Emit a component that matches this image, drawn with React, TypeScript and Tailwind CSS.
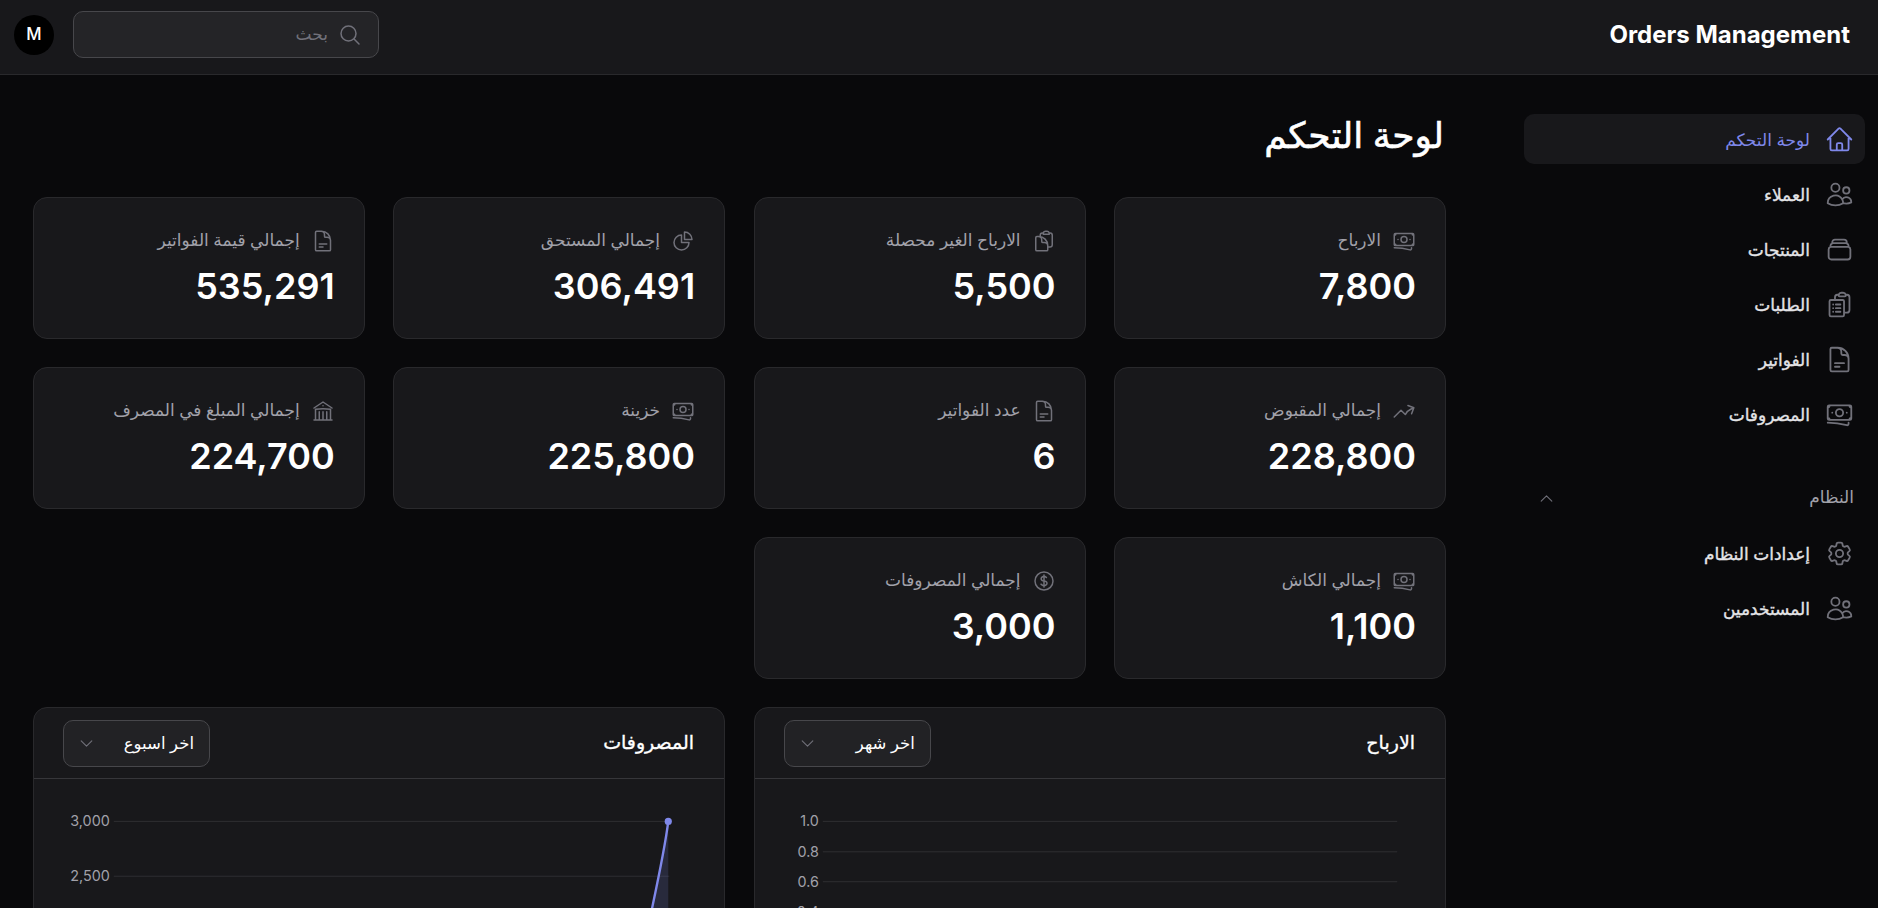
import type { ComponentType, ReactNode } from 'react'
import {
    HiOutlineArrowTrendingUp,
    HiOutlineBanknotes,
    HiOutlineBuildingLibrary,
    HiOutlineChartPie,
    HiOutlineChevronDown,
    HiOutlineChevronUp,
    HiOutlineClipboardDocument,
    HiOutlineClipboardDocumentList,
    HiOutlineCog6Tooth,
    HiOutlineCurrencyDollar,
    HiOutlineDocumentText,
    HiOutlineHome,
    HiOutlineMagnifyingGlass,
    HiOutlineRectangleStack,
    HiOutlineUsers,
} from 'react-icons/hi2'

type Icon = ComponentType<{ className?: string }>

const navTop: { label: string; icon: Icon; active?: boolean }[] = [
    { label: 'لوحة التحكم', icon: HiOutlineHome, active: true },
    { label: 'العملاء', icon: HiOutlineUsers },
    { label: 'المنتجات', icon: HiOutlineRectangleStack },
    { label: 'الطلبات', icon: HiOutlineClipboardDocumentList },
    { label: 'الفواتير', icon: HiOutlineDocumentText },
    { label: 'المصروفات', icon: HiOutlineBanknotes },
]

const navSystem: { label: string; icon: Icon }[] = [
    { label: 'إعدادات النظام', icon: HiOutlineCog6Tooth },
    { label: 'المستخدمين', icon: HiOutlineUsers },
]

const stats: { label: string; value: string; icon: Icon }[] = [
    { label: 'الارباح', value: '7,800', icon: HiOutlineBanknotes },
    { label: 'الارباح الغير محصلة', value: '5,500', icon: HiOutlineClipboardDocument },
    { label: 'إجمالي المستحق', value: '306,491', icon: HiOutlineChartPie },
    { label: 'إجمالي قيمة الفواتير', value: '535,291', icon: HiOutlineDocumentText },
    { label: 'إجمالي المقبوض', value: '228,800', icon: HiOutlineArrowTrendingUp },
    { label: 'عدد الفواتير', value: '6', icon: HiOutlineDocumentText },
    { label: 'خزينة', value: '225,800', icon: HiOutlineBanknotes },
    { label: 'إجمالي المبلغ في المصرف', value: '224,700', icon: HiOutlineBuildingLibrary },
    { label: 'إجمالي الكاش', value: '1,100', icon: HiOutlineBanknotes },
    { label: 'إجمالي المصروفات', value: '3,000', icon: HiOutlineCurrencyDollar },
]

function NavItem({ label, icon: Icon, active }: { label: string; icon: Icon; active?: boolean }) {
    return (
        <a className={`flex h-[50px] items-center gap-[15px] rounded-[10px] px-[11px] ${active ? 'bg-[#18181b]' : ''}`}>
            <Icon className={`h-[29px] w-[29px] shrink-0 ${active ? 'text-[#7f88ea]' : 'text-[#71717a]'}`} />
            <span
                className={`pt-[3px] text-[17px] font-medium ${
                    active ? 'text-[#7f88ea]' : 'text-[#e4e4e7] [-webkit-text-stroke-width:0.35px]'
                }`}
            >
                {label}
            </span>
        </a>
    )
}

function Sidebar() {
    return (
        <aside className="flex w-[386px] shrink-0 flex-col pt-[39px] pr-[13px] pl-[32px]">
            <nav className="flex flex-col gap-[5px]">
                {navTop.map((item) => (
                    <NavItem key={item.label} {...item} />
                ))}
            </nav>
            <div className="mt-[34px] flex h-[50px] items-center justify-between pr-[11px] pl-[14px]">
                <span className="text-[17px] font-medium text-[#a1a1aa]">النظام</span>
                <HiOutlineChevronUp className="h-[17px] w-[17px] text-[#71717a]" />
            </div>
            <nav className="mt-[5px] flex flex-col gap-[5px]">
                {navSystem.map((item) => (
                    <NavItem key={item.label} {...item} />
                ))}
            </nav>
        </aside>
    )
}

function StatCard({ label, value, icon: Icon }: { label: string; value: string; icon: Icon }) {
    return (
        <div className="flex h-[142px] flex-col gap-[12px] rounded-[14px] border border-[#29292c] bg-[#18181b] px-[29px] py-[31px]">
            <div className="flex h-[24px] items-center gap-[11px]">
                <Icon className="h-[24px] w-[24px] shrink-0 text-[#71717a]" />
                <span className="text-[17px] font-medium text-[#a1a1aa]">{label}</span>
            </div>
            <div dir="ltr" className="text-right text-[36px] leading-[43px] font-semibold text-white">
                {value}
            </div>
        </div>
    )
}

function Select({ label }: { label: string }) {
    return (
        <div className="flex h-[47px] w-[147px] items-center justify-between rounded-[10px] border border-[#47474b] bg-[#222225] pr-[15px] pl-[14px]">
            <span className="text-[16.5px] text-white">{label}</span>
            <HiOutlineChevronDown className="h-[17px] w-[17px] text-[#71717a]" />
        </div>
    )
}

function ChartCard({ title, filter, children }: { title: string; filter: string; children: ReactNode }) {
    return (
        <div className="rounded-[14px] border border-[#29292c] bg-[#18181b]">
            <div className="flex h-[71px] items-center justify-between border-b border-[#36363a] pr-[30px] pl-[29px]">
                <h3 className="text-[19px] font-medium text-white [-webkit-text-stroke-width:0.35px]">{title}</h3>
                <Select label={filter} />
            </div>
            {children}
        </div>
    )
}

const axisText = 'fill-[#a1a1aa] text-[14.4px]'

function ProfitChart() {
    const ticks = [
        { label: '1.0', y: 42.5 },
        { label: '0.8', y: 73 },
        { label: '0.6', y: 103 },
        { label: '0.4', y: 133 },
    ]
    return (
        <svg viewBox="0 0 692 200" className="block w-full [direction:ltr]">
            {ticks.map((t) => (
                <g key={t.label}>
                    <line x1="68" x2="644" y1={t.y} y2={t.y} stroke="#2e2e32" />
                    <text x="64" y={t.y + 5} textAnchor="end" className={axisText}>
                        {t.label}
                    </text>
                </g>
            ))}
        </svg>
    )
}

function ExpensesChart() {
    const ticks = [
        { label: '3,000', y: 42.5 },
        { label: '2,500', y: 97.5 },
    ]
    return (
        <svg viewBox="0 0 692 200" className="block w-full [direction:ltr]">
            {ticks.map((t) => (
                <g key={t.label}>
                    <line x1="80" x2="637" y1={t.y} y2={t.y} stroke="#2e2e32" />
                    <text x="76" y={t.y + 5} textAnchor="end" className={axisText}>
                        {t.label}
                    </text>
                </g>
            ))}
            <path d="M636 42.5 C632 75 622 120 611 170 L636 170 Z" fill="#7f88ea" fillOpacity="0.16" />
            <path d="M636 42.5 C632 75 622 120 611 170" fill="none" stroke="#7f88ea" strokeWidth="2.4" />
            <circle cx="636" cy="42.5" r="3.6" fill="#7f88ea" />
        </svg>
    )
}

export default function App() {
    return (
        <div dir="rtl" className="flex h-screen flex-col overflow-hidden bg-[#09090b] font-['Inter','DejaVu_Sans',sans-serif]">
            <header className="flex h-[75px] shrink-0 items-center justify-between border-b border-[#29292c] bg-[#18181b] pr-[28px] pb-[5px] pl-[14px]">
                <div dir="ltr" className="text-[24px] font-bold text-white">
                    Orders Management
                </div>
                <div className="flex items-center gap-[19px]">
                    <div className="flex h-[47px] w-[306px] items-center gap-[10px] rounded-[10px] border border-[#47474b] bg-[#242427] px-[16px]">
                        <HiOutlineMagnifyingGlass className="h-[24px] w-[24px] text-[#71717a]" />
                        <span className="text-[17px] text-[#71717a]">بحث</span>
                    </div>
                    <div className="flex h-[40px] w-[40px] items-center justify-center rounded-full bg-black text-[16.8px] font-medium text-white">
                        M
                    </div>
                </div>
            </header>
            <div className="flex min-h-0 flex-1">
                <Sidebar />
                <main className="min-w-0 flex-1 pt-[39px] pr-[46px] pl-[33px]">
                    <h1 className="h-[83px] pr-[2px] text-[36px] leading-[43px] font-medium text-white [-webkit-text-stroke-width:0.6px]">
                        لوحة التحكم
                    </h1>
                    <div className="grid grid-cols-4 gap-x-[28.8px] gap-y-[28px]">
                        {stats.map((s) => (
                            <StatCard key={s.label} {...s} />
                        ))}
                    </div>
                    <div className="mt-[28px] grid grid-cols-2 gap-x-[28.8px]">
                        <ChartCard title="الارباح" filter="اخر شهر">
                            <ProfitChart />
                        </ChartCard>
                        <ChartCard title="المصروفات" filter="اخر اسبوع">
                            <ExpensesChart />
                        </ChartCard>
                    </div>
                </main>
            </div>
        </div>
    )
}
